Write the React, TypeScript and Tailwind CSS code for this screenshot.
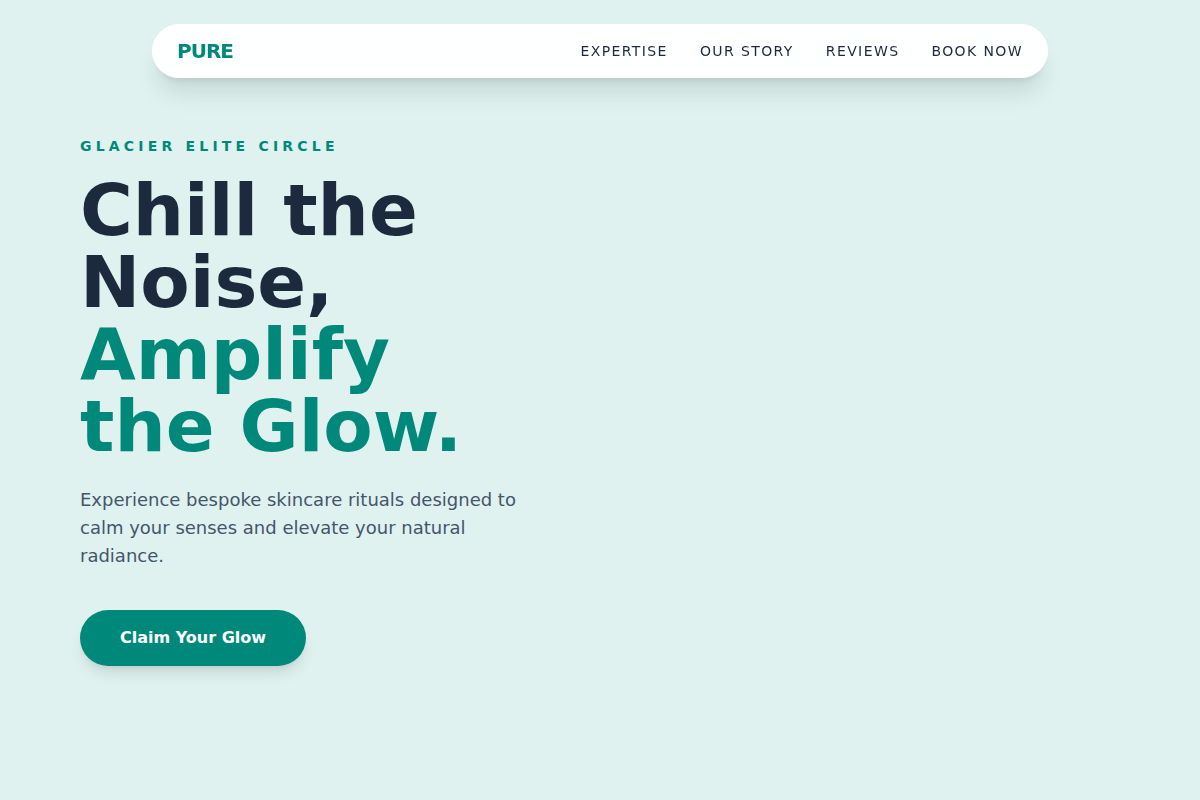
const links = [
  { label: "Expertise", href: "#expertise" },
  { label: "Our Story", href: "#story" },
  { label: "Reviews", href: "#reviews" },
  { label: "Book Now", href: "#book" },
];

function Navbar() {
  return (
    <nav className="fixed top-6 left-1/2 -translate-x-1/2 z-50 w-11/12 max-w-4xl flex items-center justify-between rounded-full border border-white/40 bg-white/95 px-6 py-3 shadow-xl">
      <a href="#top" className="text-xl font-bold tracking-tighter text-[#00897b]">
        PURE
      </a>
      <div className="hidden md:flex gap-8 text-sm font-medium uppercase tracking-widest text-slate-800">
        {links.map((link) => (
          <a key={link.href} href={link.href} className="hover:text-[#00897b]">
            {link.label}
          </a>
        ))}
      </div>
    </nav>
  );
}

function Hero() {
  return (
    <section id="top" className="grid min-h-screen items-center gap-12 px-6 md:grid-cols-2 md:px-20">
      <div>
        <span className="text-sm font-bold uppercase tracking-[0.3em] text-[#00897b]">
          Glacier Elite Circle
        </span>
        <h1 className="mt-4 mb-6 text-5xl font-bold leading-none text-slate-800 md:text-7xl">
          Chill the Noise, <br />
          <span className="text-[#00897b]">
            Amplify <br />
            the Glow.
          </span>
        </h1>
        <p className="mb-10 max-w-md text-lg text-slate-600">
          Experience bespoke skincare rituals designed to calm your senses and elevate your natural radiance.
        </p>
        <button type="button" className="rounded-full bg-[#00897b] px-10 py-4 font-bold text-white shadow-lg">
          Claim Your Glow
        </button>
      </div>
    </section>
  );
}

export default function App() {
  return (
    <main className="min-h-screen bg-[#dff2ef] font-['DejaVu_Sans',sans-serif]">
      <Navbar />
      <Hero />
    </main>
  );
}
